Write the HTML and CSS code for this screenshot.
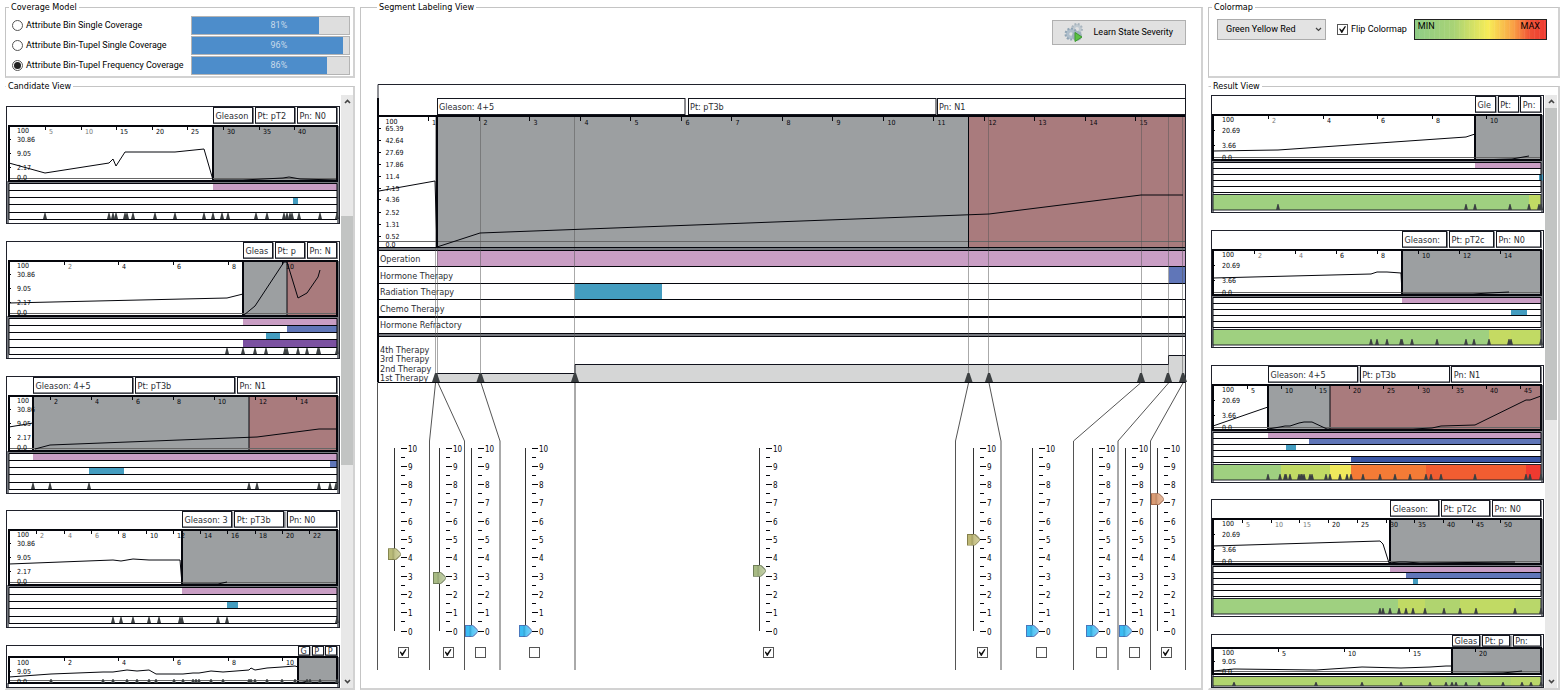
FILE: index.html
```html
<!DOCTYPE html>
<html lang="en">
<head>
<meta charset="utf-8">
<title>Segment Labeling</title>
<link rel="stylesheet" href="styles.css">
</head>
<body>
<main class="app">
  <fieldset class="panel coverage">
    <legend>Coverage Model</legend>
    <div class="coverage-rows">
      <div class="coverage-row">
        <label><input type="radio" name="model" class="radio">Attribute Bin Single Coverage</label>
        <div class="meter"><progress max="100" value="81" aria-label="Attribute Bin Single Coverage"></progress><span>81%</span></div>
      </div>
      <div class="coverage-row">
        <label><input type="radio" name="model" class="radio">Attribute Bin-Tupel Single Coverage</label>
        <div class="meter"><progress max="100" value="96" aria-label="Attribute Bin-Tupel Single Coverage"></progress><span>96%</span></div>
      </div>
      <div class="coverage-row">
        <label><input type="radio" name="model" class="radio" checked>Attribute Bin-Tupel Frequency Coverage</label>
        <div class="meter"><progress max="100" value="86" aria-label="Attribute Bin-Tupel Frequency Coverage"></progress><span>86%</span></div>
      </div>
    </div>
  </fieldset>

  <fieldset class="panel labeling">
    <legend>Segment Labeling View</legend>
    <div class="toolbar">
      <button type="button" class="learn">
        <svg width="20" height="20" viewBox="0 0 20 20" aria-hidden="true">
          <circle cx="13" cy="6" r="3.5" fill="none" stroke="#c0cad1" stroke-width="3"/>
          <circle cx="13" cy="6" r="5" fill="none" stroke="#a9b5be" stroke-width="2" stroke-dasharray="1.8 1.6"/>
          <circle cx="7" cy="11" r="3.5" fill="none" stroke="#aebecb" stroke-width="3.5"/>
          <circle cx="7" cy="11" r="5.5" fill="none" stroke="#8fa4b4" stroke-width="2" stroke-dasharray="2 1.6"/>
          <circle cx="13" cy="13" r="3.5" fill="none" stroke="#9fb0bc" stroke-width="3"/>
          <path d="M11 9.5 L18 14 L11 18.5 Z" fill="#5cc044" stroke="#3b9a2e" stroke-width="1"/>
        </svg>
        Learn State Severity
      </button>
    </div>
    <div class="timeline">
      <svg id="timeline" class="chart" viewBox="0 0 810 586" role="img" aria-label="Patient timeline"></svg>
      <div class="lanes" id="lanes"></div>
    </div>
  </fieldset>

  <fieldset class="panel colormap">
    <legend>Colormap</legend>
    <div class="colormap-row">
      <span class="select">
        <select aria-label="Colormap"><option>Green Yellow Red</option></select>
        <svg width="7" height="5" viewBox="0 0 7 5" aria-hidden="true"><path d="M1 1 L3.5 3.5 L6 1" fill="none" stroke="#444" stroke-width="1.2"/></svg>
      </span>
      <label class="flip"><input type="checkbox" class="check" checked>Flip Colormap</label>
      <div class="ramp"><span>MIN</span><span>MAX</span></div>
    </div>
  </fieldset>

  <fieldset class="panel candidates">
    <legend>Candidate View</legend>
    <div class="list" id="candidates"></div>
    <div class="scrollbar">
      <button type="button" aria-label="Scroll up"><svg width="7" height="5" viewBox="0 0 7 5"><path d="M1 4 L3.5 1.5 L6 4" fill="none" stroke="#444" stroke-width="1.6"/></svg></button>
      <div class="track"><div class="thumb"></div></div>
      <button type="button" aria-label="Scroll down"><svg width="7" height="5" viewBox="0 0 7 5"><path d="M1 1 L3.5 3.5 L6 1" fill="none" stroke="#444" stroke-width="1.6"/></svg></button>
    </div>
  </fieldset>

  <fieldset class="panel results">
    <legend>Result View</legend>
    <div class="list" id="results"></div>
    <div class="scrollbar">
      <button type="button" aria-label="Scroll up"><svg width="7" height="5" viewBox="0 0 7 5"><path d="M1 4 L3.5 1.5 L6 4" fill="none" stroke="#444" stroke-width="1.6"/></svg></button>
      <div class="track"><div class="thumb"></div></div>
      <button type="button" aria-label="Scroll down"><svg width="7" height="5" viewBox="0 0 7 5"><path d="M1 1 L3.5 3.5 L6 1" fill="none" stroke="#444" stroke-width="1.6"/></svg></button>
    </div>
  </fieldset>
</main>
<script src="charts.js"></script>
</body>
</html>
```
FILE: styles.css
```css
* { box-sizing: border-box; }

body {
  margin: 0;
  background: #fff;
  color: #000;
  font: 9px/11px Roboto, "Liberation Sans", sans-serif;
}

.app {
  display: grid;
  grid-template-columns: 350fr 843fr 352fr;
  grid-template-rows: auto 1fr;
  grid-template-areas:
    "coverage labeling colormap"
    "candidates labeling results";
  gap: 3px 5px;
  min-height: 100vh;
  padding: 2px 6px 10px 5px;
}

.panel {
  min-width: 0;
  margin: 0;
  padding: 2px 3px 1px;
  border: 1px solid #c4c4c4;
  border-right-width: 2px;
  border-bottom-width: 2px;
  border-right-color: #d2d2d2;
  border-bottom-color: #d2d2d2;
}
.panel legend {
  padding: 0 2px;
  font: 9px/11px "DejaVu Sans Condensed", "DejaVu Sans", sans-serif;
}
.coverage { grid-area: coverage; }
.labeling { grid-area: labeling; }
.colormap { grid-area: colormap; }
.candidates { grid-area: candidates; }
.results { grid-area: results; }

/* Form controls */
.radio, .check {
  appearance: none;
  display: grid;
  place-items: center;
  flex: none;
  width: 11px;
  height: 11px;
  margin: 0;
  border: 1px solid #555;
  background: #fff;
}
.radio { border-radius: 50%; }
.radio:checked::before {
  content: "";
  width: 7px;
  height: 7px;
  border-radius: 50%;
  background: #222;
}
.check:checked::before {
  content: "";
  width: 7px;
  height: 7px;
  background: #111;
  clip-path: polygon(0 40%, 15% 35%, 40% 62%, 85% 0, 100% 8%, 45% 100%, 35% 100%);
}

/* Coverage model */
.coverage-rows { padding-left: 3px; }
.coverage-row {
  display: flex;
  justify-content: space-between;
  align-items: center;
  height: 20px;
}
.coverage-row label, .flip {
  display: flex;
  align-items: center;
  gap: 3px;
  white-space: nowrap;
}
.meter {
  display: grid;
  width: 47%;
  height: 19px;
}
.meter progress {
  grid-area: 1 / 1;
  appearance: none;
  width: 100%;
  height: 100%;
  border: 1px solid #b4b4b4;
}
.meter progress::-webkit-progress-bar { background: #dedede; }
.meter progress::-webkit-progress-value { background: #4d8dcb; }
.meter span {
  grid-area: 1 / 1;
  z-index: 1;
  align-self: center;
  padding-left: 50%;
  color: #c8d9ea;
}

/* Segment labeling */
.labeling { padding: 7px 14px 17px 16px; }
.toolbar {
  display: flex;
  justify-content: flex-end;
  padding-right: 1px;
}
.learn {
  display: flex;
  align-items: center;
  gap: 10px;
  height: 25px;
  padding: 0 12px 0 11px;
  border: 1px solid #b0b0b0;
  background: #e1e1e1;
  color: inherit;
  font: inherit;
}
.timeline {
  display: grid;
  margin-top: 39px;
}
.timeline .chart, .lanes { grid-area: 1 / 1; }
.chart {
  display: block;
  width: 100%;
  height: auto;
  flex: none;
  font-family: "DejaVu Sans Condensed", "DejaVu Sans", sans-serif;
}
.lanes {
  display: grid;
  grid-template-columns: 58fr 32fr 32fr 76fr 392fr 36fr 82fr 38fr 28fr 36fr;
  align-self: end;
  z-index: 1;
  margin: 0 3px 12px -3px;
}
.lane {
  display: flex;
  flex-direction: column;
  align-items: center;
  gap: 10px;
  min-width: 0;
}
.slider { display: flex; }
.slider input {
  appearance: none;
  writing-mode: vertical-lr;
  direction: rtl;
  width: 13px;
  height: 195px;
  margin: 0;
  background: linear-gradient(#333, #333) center / 1px 183px no-repeat;
}
.slider input::-webkit-slider-thumb {
  appearance: none;
  width: 13px;
  height: 12px;
  background:
    linear-gradient(90deg, transparent 4px, #0002 5px, #fff2 7px, #fff4 11px),
    conic-gradient(from 222deg at 11px 5px, var(--knob) 96deg, var(--edge) 0) 1px 1px / 11px 10px no-repeat,
    var(--edge);
  clip-path: polygon(0 0, 8px 0, 13px 5px, 13px 7px, 8px 100%, 0 100%);
}
.knob-blue { --knob: #3bbcf3; --edge: #4a78bd; }
.knob-olive { --knob: #b9bb78; --edge: #85864f; }
.knob-green { --knob: #a8bb84; --edge: #71805a; }
.knob-khaki { --knob: #bdb774; --edge: #85804b; }
.knob-orange { --knob: #d99b73; --edge: #a86c4c; }

/* Colormap */
.colormap-row {
  display: flex;
  align-items: center;
  gap: 11px;
  padding: 4px 8px 0 5px;
}
.select {
  display: grid;
  align-items: center;
  width: 109px;
  height: 21px;
}
.select select {
  grid-area: 1 / 1;
  appearance: none;
  width: 100%;
  height: 100%;
  padding: 0 8px;
  border: 1px solid #ababab;
  border-radius: 0;
  background: #e3e3e3;
  color: inherit;
  font: inherit;
}
.select svg {
  grid-area: 1 / 1;
  z-index: 1;
  justify-self: end;
  margin-right: 4px;
  pointer-events: none;
}
.ramp {
  display: flex;
  flex: 1;
  justify-content: space-between;
  height: 21px;
  margin-left: -4px;
  padding: 1px 6px 0 3px;
  border: 1px solid #222;
  background:
    repeating-linear-gradient(90deg, #fff0 0 4px, #fff1 4px 5px),
    linear-gradient(90deg, #8fcc86, #a9d375 30%, #f7ec57 56%, #f9a145 75%, #ef5035 88%, #ee3a30);
}

/* Candidate and result lists */
.candidates, .results {
  display: flex;
  gap: 1px;
  border-left-color: transparent;
}
.candidates { padding: 3px 0 0; }
.results { padding: 3px 1px 0 2px; }
.list {
  display: flex;
  flex: 1;
  flex-direction: column;
  justify-content: space-between;
  min-width: 0;
}
.candidates .list { padding-top: 11px; }
.scrollbar {
  display: flex;
  flex-direction: column;
  width: 12px;
  background: #e8e8e8;
}
.scrollbar button {
  display: grid;
  place-items: center;
  height: 13px;
  padding: 0;
  border: 0;
  background: none;
}
.scrollbar .track {
  display: flex;
  flex-direction: column;
  flex: 1;
}
.scrollbar .thumb { background: #c2c4c3; }
.candidates .thumb { height: 44%; margin-top: 108px; }
.candidates .track { display: block; }
.results .thumb { height: 55%; }

/* Chart drawing */
.chart text { fill: #2b2d33; }
.chart .tick { font-size: 7px; fill: #05060c; }
.chart .pale { fill: #777; }
.chart .tag { font-size: 9px; }
.scale { font: 8px "DejaVu Sans Condensed", "DejaVu Sans", sans-serif; }
.scale text { fill: #05060c; }
.frame { fill: none; stroke: #20222c; stroke-width: 1; }
.plot { fill: none; stroke: #05060c; stroke-width: 2; }
.rule { stroke: #05060c; stroke-width: 1; }
.heavy { stroke-width: 2; }
.base { stroke: #666; stroke-width: 1; }
.guide { stroke: #555; stroke-opacity: 0.5; stroke-width: 1; }
.lead { fill: none; stroke: #555; stroke-width: 1; }
.curve { fill: none; stroke: #05060c; stroke-width: 1; }
.mark { fill: #3c4042; }
.box { fill: #fff; stroke: #15171f; stroke-width: 1; }
.gutter { fill: #777a80; }
.steps { fill: #d5d6d6; stroke: #10121c; stroke-width: 1; }
.grey { fill: #9c9fa1; }
.red { fill: #a97b7d; }
.white { fill: #fff; }
.pink { fill: #c99ec4; }
.blue { fill: #6076b8; }
.teal { fill: #449dc0; }
.purple { fill: #7b51a1; }
.navy { fill: #3a56a5; }
```
FILE: charts.js
```js
const range = (from, to, step) => {
  const out = [];
  for (let n = from; n <= to; n += step) out.push(n);
  return out;
};
const rect = (cls, x, y, w, h) => `<rect class="${cls}" x="${x}" y="${y}" width="${w}" height="${h}"/>`;
const line = (cls, x1, y1, x2, y2) => `<line class="${cls}" x1="${x1}" y1="${y1}" x2="${x2}" y2="${y2}"/>`;
const text = (cls, x, y, s) => `<text class="${cls}" x="${x}" y="${y}">${s}</text>`;
const marker = (x, y, half, h) => `<path class="mark" d="M${x - half} ${y} L${x - half / 4} ${y - h} H${x + half / 4} L${x + half} ${y} Z"/>`;
const curve = (pts) => `<polyline class="curve" points="${pts}"/>`;

// Vertical geometry of each card type.
const layouts = {
  candidate: { w: 334, h: 118, tag: [1.5, 17], plot: [20, 75], rows: [77.5, 84.5, 91.5, 98.5, 106.5, 113.5],
    y: [['100', 24], ['30.86', 33], ['9.05', 47], ['2.17', 61], ['0.0', 71]], marks: 113, mh: 6, left: 3, right: 331 },
  candidateShort: { w: 334, h: 43, tag: [1.5, 10], plot: [12, 38], rows: [],
    y: [['100', 17], ['9.05', 26], ['0.0', 36]], marks: 38, mh: 4, left: 3, right: 331 },
  result: { w: 333, h: 118, tag: [1.5, 17], plot: [20, 65], rows: [67.5, 73.5, 79.5, 85.5, 91.5, 97.5],
    y: [['100', 24], ['20.69', 35], ['3.66', 50], ['0.0', 62]], strip: [99.5, 115], marks: 115, mh: 6, left: 2, right: 330 },
  resultShort: { w: 333, h: 54, tag: [1.5, 12], plot: [14, 40], rows: [],
    y: [['100', 18], ['9.05', 27], ['0.0', 37]], strip: [42.5, 52], marks: 52, mh: 4, left: 2, right: 330 },
};

function card(d) {
  const L = layouts[d.layout];
  const [top, bottom] = L.plot;
  let s = rect('white', 0, 0, L.w, L.h);
  s += rect('gutter', 1, bottom, 2, L.h - bottom - 1) + rect('gutter', L.right, top, 2, L.h - top - 1);
  s += rect('grey', d.split, top, (d.red || L.right) - d.split, bottom - top);
  if (d.red) s += rect('red', d.red, top, L.right - d.red, bottom - top);
  if (d.red) s += line('rule', d.red, top, d.red, bottom);
  s += line('rule heavy', d.split, top, d.split, bottom);
  s += line('base', L.left, bottom - 2.5, L.right, bottom - 2.5);

  const [first, x0, dx, count, step, pale] = d.ticks;
  range(0, count - 1, 1).forEach((i) => {
    const x = Math.round(x0 + dx * i);
    s += line('rule', x + 0.5, top, x + 0.5, top + 4);
    s += text(i < pale ? 'tick pale' : 'tick', x + 4, top + 8, first + step * i);
  });
  L.y.forEach(([label, y], i) => {
    if (i && i < L.y.length - 1) s += line('rule', L.left, y + 0.5, L.left + 2, y + 0.5);
    s += text('tick', 11, y + 3, label);
  });
  d.curves.forEach((c) => { s += curve(c); });
  s += rect('plot', L.left, top, L.right - L.left, bottom - top);

  const gap = 2;
  const w = (L.right - d.split - gap * 2) / 3;
  d.tags.forEach((t, i) => {
    const x = d.split + i * (w + gap);
    s += rect('gutter', x, L.tag[0], w + gap - 1, L.tag[1] - L.tag[0] + 1);
    s += rect('box', Math.round(x) + 0.5, L.tag[0], Math.round(w) - 1, L.tag[1] - L.tag[0]);
    s += text('tag', x + 2.5, (L.tag[0] + L.tag[1]) / 2 + 3.5, t);
  });

  if (L.rows.length) {
    const n = L.rows.length - 1;
    s += rect('gutter', 1, bottom + 1, L.right, 2);
    s += rect('white', L.left, L.rows[0], L.right - L.left, L.rows[n] - L.rows[0]);
    (d.bars || []).forEach(([r, c, a, b]) => { s += rect(c, a, L.rows[r], b - a, L.rows[r + 1] - L.rows[r]); });
    L.rows.forEach((y) => { s += line('rule', L.left, y, L.right, y); });
    s += line('rule', L.right, L.rows[0], L.right, L.rows[n]) + line('rule', L.left, L.rows[0], L.left, L.rows[n]);
  }
  if (L.strip) {
    const [a, b] = L.strip;
    d.strip.forEach(([color, x1, x2]) => { s += `<rect fill="${color}" x="${x1}" y="${a}" width="${x2 - x1}" height="${b - a}"/>`; });
    s += rect('frame', L.left, a, L.right - L.left, b - a);
  }
  d.marks.forEach((x) => { s += marker(x, L.marks, 2, L.mh); });
  s += rect('frame', 0.5, 0.5, L.w - 1, L.h - 1);
  return `<svg class="chart" viewBox="0 0 ${L.w} ${L.h}" role="img" aria-label="${d.tags.join(', ')}">${s}</svg>`;
}

const candidates = [
  { layout: 'candidate', split: 207, ticks: [5, 39, 35.6, 8, 5, 2], tags: ['Gleason', 'Pt: pT2', 'Pn: N0'],
    curves: ['3,57 39,67 103,57 107,53 110,60 119,46 127,46 149,46 169,46 198,43 207,74 237,74 277,72 283,71 294,73 331,74'],
    bars: [[0, 'pink', 207, 331], [2, 'teal', 287, 292]],
    marks: [39, 103, 107, 110, 119, 121, 127, 149, 169, 198, 207, 216, 222, 250, 261, 278, 281, 284, 286, 293, 314, 331] },
  { layout: 'candidate', split: 237, red: 281, ticks: [2, 57.7, 54.6, 5, 2, 1], tags: ['Gleas', 'Pt: p', 'Pn: N'],
    curves: ['3,62 221,57 237,53', '238,74 249,65 278,21 281,21 292,57 301,52 312,36 314,29'],
    bars: [[0, 'pink', 237, 331], [1, 'blue', 281, 331], [2, 'teal', 260, 274], [3, 'purple', 237, 331]],
    marks: [221, 237, 249, 260, 279, 281, 292, 301, 312, 313, 331] },
  { layout: 'candidate', split: 27, red: 243, ticks: [2, 43.7, 41, 7, 2, 0], tags: ['Gleason: 4+5', 'Pt: pT3b', 'Pn: N1'],
    curves: ['3,51 27,47', '29,73 44,69 251,61 313,53 331,53'],
    bars: [[0, 'pink', 27, 331], [1, 'blue', 324, 331], [2, 'teal', 83, 118]],
    marks: [27, 44, 83, 243, 251, 313, 324, 330] },
  { layout: 'candidate', split: 176, ticks: [2, 30.3, 27.3, 11, 2, 3], tags: ['Gleason: 3', 'Pt: pT3b', 'Pn: N0'],
    curves: ['3,54 107,50 115,51 127,49 143,50 153,50 174,50 176,74 212,74 221,72'],
    bars: [[0, 'pink', 176, 331], [2, 'teal', 221, 232]],
    marks: [107, 115, 127, 143, 153, 174, 176, 212, 221, 331] },
  { layout: 'candidateShort', split: 292, ticks: [2, 57.7, 54.6, 5, 2, 0], tags: ['G', 'P', 'P'],
    curves: ['3,32 45,29 97,27 107,27 121,25 131,26 143,25 150,29 168,29 177,29 187,28 193,28 205,26 217,27 243,25 245,23 249,25 261,23 276,22 289,21 292,22', '294,38 302,36'],
    marks: [45, 97, 107, 121, 131, 143, 150, 168, 177, 187, 190, 193, 205, 217, 243, 245, 249, 261, 276, 289, 301, 304, 314, 331] },
];

const ramp = { green: '#9fd080', leaf: '#b0d46f', lime: '#c1da64', yellow: '#f0e95c', amber: '#f47b36', orange: '#f15d31', red: '#ef3a30' };
const results = [
  { layout: 'result', split: 264, ticks: [2, 57, 54.6, 5, 2, 1], tags: ['Gle', 'Pt:', 'Pn:'],
    curves: ['2,56 67,55 255,42 264,39 264,65 301,64 318,61'],
    bars: [[0, 'pink', 264, 330], [2, 'teal', 328, 332]],
    strip: [[ramp.green, 2, 318], [ramp.lime, 318, 330]],
    marks: [67, 255, 264, 299, 318, 328, 330] },
  { layout: 'result', split: 191, ticks: [2, 42.7, 41.1, 7, 2, 2], tags: ['Gleason:', 'Pt: pT2c', 'Pn: N0'],
    curves: ['2,48 160,44 166,42 176,42 190,43 191,64 262,64 278,63 298,62'],
    bars: [[0, 'pink', 191, 330], [2, 'teal', 300, 316]],
    strip: [[ramp.green, 2, 278], ['#c5da62', 278, 300], [ramp.lime, 300, 330]],
    marks: [160, 166, 176, 190, 191, 201, 226, 255, 263, 278, 298, 300, 330] },
  { layout: 'result', split: 57, red: 119, ticks: [5, 36, 34.1, 9, 5, 0], tags: ['Gleason: 4+5', 'Pt: pT3b', 'Pn: N1'],
    curves: ['2,61 57,42', '57,64 69,62 74,61 79,61 88,58 93,57 101,57 116,64 202,64 221,63 230,61 264,60 315,35 319,35 330,31'],
    bars: [[0, 'pink', 57, 330], [1, 'blue', 98, 330], [2, 'teal', 75, 85], [4, 'navy', 140, 330]],
    strip: [[ramp.green, 2, 70], [ramp.lime, 70, 119], [ramp.yellow, 119, 140], [ramp.amber, 140, 215], [ramp.orange, 215, 315], [ramp.red, 315, 330]],
    marks: [57, 69, 74, 75, 79, 88, 90, 91, 93, 99, 101, 115, 119, 129, 136, 140, 152, 169, 184, 199, 215, 220, 230, 264, 315, 319, 330] },
  { layout: 'result', split: 179, ticks: [5, 31, 28.7, 10, 5, 3], tags: ['Gleason:', 'Pt: pT2c', 'Pn: N0'],
    curves: ['2,47 169,42 172,45 178,64 188,63 195,63 209,64 304,63'],
    bars: [[0, 'pink', 179, 330], [1, 'blue', 195, 330], [2, 'teal', 202, 207]],
    strip: [[ramp.green, 2, 187], [ramp.lime, 187, 214], [ramp.leaf, 214, 249], [ramp.lime, 249, 304], ['#b9d76a', 304, 330]],
    marks: [169, 172, 179, 188, 195, 202, 214, 233, 249, 265, 304, 330] },
  { layout: 'resultShort', split: 241, ticks: [5, 67, 65.6, 4, 5, 0], tags: ['Gleas', 'Pt: p', 'Pn:'],
    curves: ['2,37 23,35 105,36 151,33 190,34 219,33 235,32 241,32 241,40 292,39 311,37'],
    strip: [[ramp.leaf, 2, 235], ['#a5d27c', 235, 268], [ramp.leaf, 268, 300], ['#b9d76a', 300, 330]],
    marks: [23, 105, 151, 190, 219, 235, 241, 245, 255, 268, 292, 311, 320, 330] },
];

document.getElementById('candidates').innerHTML = candidates.map(card).join('');
document.getElementById('results').innerHTML = results.map(card).join('');

// Main timeline.
function timeline() {
  const right = 808.5;
  let s = rect('grey', 60, 32, 532, 132) + rect('red', 592, 32, right - 592, 132);
  s += line('base', 1, 157.5, right, 157.5);
  range(1, 15, 1).forEach((n) => {
    const x = Math.round(51 + 50.5 * (n - 1)) + 0.5;
    s += line('rule', x, 32, x, 37);
    if (n > 1) s += text('tick', x + 4, 41, n);
  });
  s += text('tick', 55, 41, '1');
  s += rect('grey', 60, 34, 3, 10);
  [['100', 37], ['65.39', 44], ['42.64', 56], ['27.69', 68], ['17.86', 80], ['11.4', 92], ['7.15', 104],
    ['4.36', 115], ['2.52', 128], ['1.31', 140], ['0.52', 152], ['0.0', 160]].forEach(([label, y], i, all) => {
    s += text('tick', 8.5, y + 3, label);
    if (i && i < all.length - 1) s += line('rule', 1, y + 0.5, 4, y + 0.5);
  });

  s += rect('gutter', 1, 163, right - 1, 4);
  const rows = [166.5, 182.5, 199.5, 215.5, 233, 249.5];
  s += rect('pink', 60, 167, right - 60, 15) + rect('blue', 792, 183, right - 792, 16) + rect('teal', 198, 200, 87, 16);
  rows.forEach((y, i) => { s += line(i === 4 ? 'rule heavy' : 'rule', 1, y, right, y); });
  s += rect('gutter', 1, 250, right - 1, 2) + line('rule', 1, 252.5, right, 252.5);
  ['Operation', 'Hormone Therapy', 'Radiation Therapy', 'Chemo Therapy', 'Hormone Refractory'].forEach((t, i) => {
    s += text('tag', 3, 178 + Math.round(16.6 * i), t);
  });

  s += `<path class="steps" d="M59 298.5 V289.5 H198 V280.5 H791.5 V271.5 H${right} V298.5 Z"/>`;
  ['4th Therapy', '3rd Therapy', '2nd Therapy', '1st Therapy'].forEach((t, i) => {
    s += text('tag', 3, [269, 278, 288, 297][i], t);
  });
  [58.5, 60.5, 103.5, 197.5, 591.5, 611.5, 764.5, 791.5, 805.5].forEach((x) => { s += line('guide', x, 32, x, 298); });
  s += line('rule heavy', 60, 32, 60, 164) + line('rule', 591.5, 32, 591.5, 164);
  s += curve('2,107 58,97 60,163 103,149 612,130 764,111 806,111');
  s += line('rule heavy', 1, 32, right, 32) + line('rule', 1, 163.5, right, 163.5) + line('rule', 1, 298.5, right, 298.5);
  s += `<path class="rule heavy" fill="none" d="M1 14 V298.5"/><path class="frame" d="M1 14 V0.5 H${right} V299"/>`;
  [[60, 'Gleason: 4+5', 248], [311, 'Pt: pT3b', 248], [560, 'Pn: N1', 248.5]].forEach(([x, t, w]) => {
    s += rect('box', x + 0.5, 14.5, w - 0.5, 16) + text('tag', x + 2, 26, t);
  });
  [59, 103.5, 198, 591.5, 612, 764, 791, 806].forEach((x) => { s += marker(x, 298, 4, 9); });

  // Leaders that fan out from each marker to its slider lane.
  [[0.5, 0.5], [58.5, 52.5], [61, 87.5], [104, 123], [198, 198], [591.5, 578.5], [612, 624], [763.5, 696.5],
    [791.5, 741], [806, 773.5], [808.5, 808.5]].forEach(([a, b]) => {
    s += `<path class="lead" d="M${a} 299 L${b} 357 V586"/>`;
  });
  return s;
}
document.getElementById('timeline').innerHTML = timeline();

const lanes = [[4.2, 'olive'], [2.9, 'green'], [0, 'blue'], [0, 'blue'], [3.3, 'green'], [5, 'khaki'],
  [0, 'blue'], [0, 'blue'], [0, 'blue'], [7.2, 'orange']];
const scale = range(0, 20, 1).map((i) => {
  const y = Math.round(5.5 + i * 9.15);
  return i % 2
    ? line('rule', 0, y + 0.5, 4, y + 0.5)
    : line('rule', 0, y + 0.5, 6, y + 0.5) + text('num', 7, y + 3.5, 10 - i / 2);
}).join('');
document.getElementById('lanes').innerHTML = lanes.map(([value, knob], i) => `
  <div class="lane">
    <div class="slider">
      <input type="range" class="knob-${knob}" min="0" max="10" step="0.1" value="${value}" aria-label="Severity of segment ${i + 1}">
      <svg class="scale" width="17" height="195" viewBox="0 0 17 195" aria-hidden="true">${scale}</svg>
    </div>
    <input type="checkbox" class="check" aria-label="Use segment ${i + 1}"${value ? ' checked' : ''}>
  </div>`).join('');
```
